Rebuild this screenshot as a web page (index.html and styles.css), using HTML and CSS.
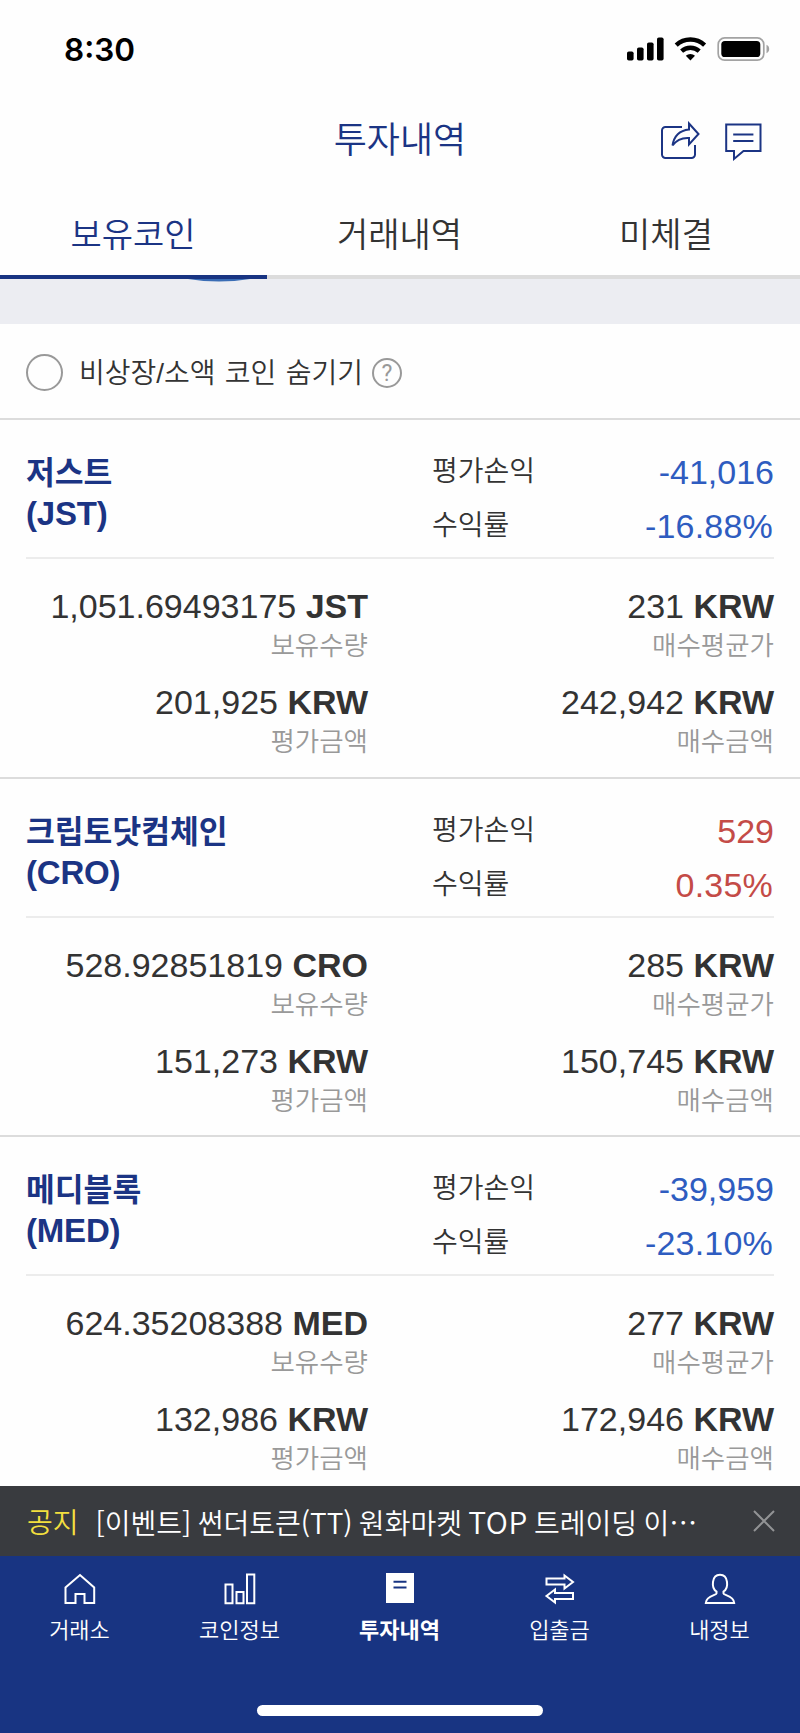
FILE: index.html
```
<!DOCTYPE html>
<html lang="ko">
<head>
    <meta charset="UTF-8">
    <meta name="viewport" content="width=device-width, initial-scale=1.0">
    <title>투자내역</title>
    <link rel="stylesheet" href="styles.css">
</head>
<body>
    <div class="screen">
        <div class="status-bar">
            <span class="time">8:30</span>
            <svg class="status-icons" width="144" height="26" viewBox="0 0 144 26">
                <rect x="1" y="15.5" width="6.6" height="9" rx="1.8"/>
                <rect x="11" y="11.5" width="6.6" height="13" rx="1.8"/>
                <rect x="21" y="6.5" width="6.6" height="18" rx="1.8"/>
                <rect x="31" y="1.5" width="6.6" height="23" rx="1.8"/>
                <path d="M50.2 9.2a20.5 20.5 0 0 1 28.4 0M55.6 15.2a13 13 0 0 1 17.6 0" fill="none" stroke="#000" stroke-width="4.4"/>
                <path d="M64.4 24.4l-4.6-4.6a6.7 6.7 0 0 1 9.2 0z"/>
                <rect x="92.2" y="1.9" width="45.6" height="22.3" rx="6.5" fill="none" stroke="#a3a3a3" stroke-width="1.7"/>
                <rect x="95.3" y="5" width="39" height="16" rx="3.6"/>
                <path d="M140.5 8.8v8.4c1.7-.7 2.7-2.2 2.7-4.2s-1-3.5-2.7-4.2z" fill="#a3a3a3"/>
            </svg>
        </div>

        <div class="header">
            <h1>투자내역</h1>
            <div class="header-icons">
                <svg width="40" height="40" viewBox="0 0 40 40">
                    <path d="M22 6H5.5A3.5 3.5 0 0 0 2 9.500V33.500A3.5 3.5 0 0 0 5.5 37H31.500A3.5 3.5 0 0 0 35 33.500V24"/>
                    <path d="M29 2.5l9.500 10.500-9.500 10.500v-6.500c-8-.5-12.500 2-16.500 7.500 1.500-9.500 7-15 16.500-16z"/>
                </svg>
                <svg width="40" height="40" viewBox="0 0 40 40">
                    <path d="M2.2 3.5h34.3v26.4H19.500l-9.500 8v-8H2.200zM9.200 13.500h20.200M9.200 20h20.200"/>
                </svg>
            </div>
        </div>

        <div class="tabs">
            <div class="tab active">보유코인</div>
            <div class="tab">거래내역</div>
            <div class="tab">미체결</div>
        </div>

        <div class="content">
            <div class="chart-area">
                <svg width="62" height="3" viewBox="0 0 62 3">
                    <path d="M0 0h62q-31 5-62 0z" fill="#3a6db5"/>
                </svg>
            </div>

            <div class="filter">
                <span class="radio"></span>
                <span class="filter-label">비상장/소액 코인 숨기기</span>
                <span class="help">?</span>
            </div>

            <div class="coin">
                <div class="summary">
                    <div class="name">저스트<b>(JST)</b></div>
                    <div class="rates">
                        <div class="rate"><span>평가손익</span><span class="value down">-41,016</span></div>
                        <div class="rate"><span>수익률</span><span class="value down percent">-16.88%</span></div>
                    </div>
                </div>
                <div class="details">
                    <div class="item">1,051.69493175 <b>JST</b><small>보유수량</small></div>
                    <div class="item">231 <b>KRW</b><small>매수평균가</small></div>
                    <div class="item">201,925 <b>KRW</b><small>평가금액</small></div>
                    <div class="item">242,942 <b>KRW</b><small>매수금액</small></div>
                </div>
            </div>

            <div class="coin">
                <div class="summary">
                    <div class="name">크립토닷컴체인<b>(CRO)</b></div>
                    <div class="rates">
                        <div class="rate"><span>평가손익</span><span class="value up">529</span></div>
                        <div class="rate"><span>수익률</span><span class="value up percent">0.35%</span></div>
                    </div>
                </div>
                <div class="details">
                    <div class="item">528.92851819 <b>CRO</b><small>보유수량</small></div>
                    <div class="item">285 <b>KRW</b><small>매수평균가</small></div>
                    <div class="item">151,273 <b>KRW</b><small>평가금액</small></div>
                    <div class="item">150,745 <b>KRW</b><small>매수금액</small></div>
                </div>
            </div>

            <div class="coin">
                <div class="summary">
                    <div class="name">메디블록<b>(MED)</b></div>
                    <div class="rates">
                        <div class="rate"><span>평가손익</span><span class="value down">-39,959</span></div>
                        <div class="rate"><span>수익률</span><span class="value down percent">-23.10%</span></div>
                    </div>
                </div>
                <div class="details">
                    <div class="item">624.35208388 <b>MED</b><small>보유수량</small></div>
                    <div class="item">277 <b>KRW</b><small>매수평균가</small></div>
                    <div class="item">132,986 <b>KRW</b><small>평가금액</small></div>
                    <div class="item">172,946 <b>KRW</b><small>매수금액</small></div>
                </div>
            </div>
        </div>

        <div class="notice">
            <span class="notice-tag">공지</span>
            <span class="notice-text">[이벤트] 썬더토큰(TT) 원화마켓 <span class="latin">TOP</span> 트레이딩 이⋯</span>
            <svg width="22" height="22" viewBox="0 0 22 22">
                <path d="M1 1l20 20M21 1L1 21"/>
            </svg>
        </div>

        <div class="bottom-nav">
            <div class="nav-items">
                <div class="nav-item">
                    <svg width="32" height="32" viewBox="0 0 32 32">
                        <path d="M1.5 30V14.500L16 2l14.200 12.500V30h-9.700v-9h-9v9z"/>
                    </svg>
                    <span>거래소</span>
                </div>
                <div class="nav-item">
                    <svg width="32" height="32" viewBox="0 0 32 32">
                        <path d="M1.5 11.500h7v18.700h-7zM12.500 19h7v11.200h-7zM23 1.500h7.300v28.700H23z"/>
                    </svg>
                    <span>코인정보</span>
                </div>
                <div class="nav-item active">
                    <svg width="32" height="32" viewBox="0 0 32 32">
                        <path class="solid" d="M2 0h28v30H2z"/>
                        <path class="lines" d="M9.500 8.800h13M9.500 14.600h13"/>
                    </svg>
                    <span>투자내역</span>
                </div>
                <div class="nav-item">
                    <svg width="32" height="32" viewBox="0 0 32 32">
                        <path d="M2.500 5.500H20.500V2.500l8.500 6.500-8.500 6.500v-4H2.500zM29 20H11v-3.500L2.500 23 11 29.500v-3.500h18z"/>
                    </svg>
                    <span>입출금</span>
                </div>
                <div class="nav-item">
                    <svg width="32" height="32" viewBox="0 0 32 32">
                        <path d="M12.500 18.500C7 15 7.500 1.700 16 1.700S25 15 19.500 18.500v2c0 1.800 10.500 2.200 10.700 9.500H1.800c.2-7.300 10.700-7.700 10.700-9.500z"/>
                    </svg>
                    <span>내정보</span>
                </div>
            </div>
            <div class="home-indicator"></div>
        </div>
    </div>
</body>
</html>
```

FILE: styles.css
```
* {
    box-sizing: border-box;
}
body {
    margin: 0;
    background: #fefefe;
    color: #333;
    font-family: "Liberation Sans", "Noto Sans CJK KR", sans-serif;
}
.screen {
    display: flex;
    flex-direction: column;
    width: 800px;
    height: 1733px;
    overflow: hidden;
}
.status-bar {
    display: flex;
    justify-content: space-between;
    height: 96px;
    padding: 36px 30px 0 64px;
}
.time {
    padding-top: 1px;
    font-family: Inter, sans-serif;
    font-size: 31.5px;
    font-weight: 600;
    line-height: 26px;
    color: #000;
}
.header {
    display: grid;
    grid-template-columns: 1fr auto 1fr;
    align-items: center;
    height: 90px;
    padding: 0 36px;
}
.header h1 {
    grid-column: 2;
    margin: 0;
    font-size: 36px;
    font-weight: 350;
    line-height: 40px;
    color: #1b3484;
}
.header-icons {
    display: flex;
    justify-content: flex-end;
    gap: 24px;
}
.header-icons svg {
    fill: none;
    stroke: #1b3484;
    stroke-width: 2;
}
.tabs {
    display: grid;
    grid-template-columns: 267px 266px 267px;
    height: 93px;
}
.tab {
    border-bottom: 4px solid #dcdcdc;
    padding: 29px 1px 0 0;
    font-size: 34px;
    font-weight: 350;
    line-height: 40px;
    text-align: center;
}
.tab.active {
    border-color: #183482;
    color: #1b3484;
}
.content {
    flex: 1;
    min-height: 0;
    overflow: hidden;
}
.chart-area {
    height: 45px;
    padding-left: 188px;
    background: #ecedf2;
}
.chart-area svg {
    display: block;
}
.filter {
    display: flex;
    align-items: center;
    height: 94px;
    padding: 2px 26px 0;
}
.radio {
    width: 37px;
    height: 37px;
    border: 2px solid #999;
    border-radius: 50%;
}
.filter-label {
    margin-left: 16px;
    padding-top: 3px;
    font-size: 28px;
    font-weight: 350;
    line-height: 40px;
    word-spacing: 1.5px;
}
.help {
    width: 30px;
    height: 30px;
    margin: 1px 0 0 9px;
    border: 2px solid #999;
    border-radius: 50%;
    font-family: Roboto, sans-serif;
    font-size: 23px;
    line-height: 27px;
    text-align: center;
    color: #999;
}
.coin {
    height: 358.5px;
    padding: 0 26px;
    border-top: 2px solid #dcdcdc;
}
.summary {
    display: grid;
    grid-template-columns: 406px 1fr;
    height: 139px;
    padding-top: 25px;
    border-bottom: 2px solid #ececec;
}
.name {
    padding-top: 8px;
    font-size: 31.3px;
    font-weight: bold;
    line-height: 41px;
    color: #1b3484;
}
.name b {
    display: block;
    margin-top: -1px;
    font-size: 33px;
    letter-spacing: -0.2px;
}
.rate {
    display: flex;
    justify-content: space-between;
    height: 54px;
    font-size: 28px;
    font-weight: 350;
    line-height: 54px;
}
.value {
    font-size: 34px;
}
.percent {
    padding-right: 1px;
    letter-spacing: 0.2px;
}
.down {
    color: #2e5cc0;
}
.up {
    color: #c44b47;
}
.details {
    display: grid;
    grid-template-columns: 342px 406px;
    row-gap: 16px;
    padding-top: 27px;
    text-align: right;
}
.item {
    font-size: 34px;
    line-height: 40px;
}
.item small {
    display: block;
    font-size: 26.5px;
    font-weight: 350;
    line-height: 40px;
    color: #999;
}
.notice {
    display: flex;
    align-items: center;
    height: 70px;
    padding: 0 25px 0 27px;
    background: #393b3f;
    font-family: "Noto Sans CJK KR", sans-serif;
    font-size: 28px;
    font-weight: 350;
    line-height: 38px;
    color: #fff;
}
.notice-tag {
    margin-right: 17px;
    color: #f3df3e;
}
.notice-text {
    flex: 1;
    white-space: nowrap;
    word-spacing: -1.5px;
}
.latin {
    font-size: 30px;
    letter-spacing: 0.5px;
}
.notice svg {
    fill: none;
    stroke: #929395;
    stroke-width: 2;
}
.bottom-nav {
    display: flex;
    flex-direction: column;
    justify-content: space-between;
    align-items: center;
    height: 177px;
    padding: 17px 0;
    background: #183482;
}
.nav-items {
    display: grid;
    grid-template-columns: repeat(5, 160px);
}
.nav-item {
    display: flex;
    flex-direction: column;
    align-items: center;
    padding-right: 1px;
    font-size: 22px;
    font-weight: 350;
    line-height: 30px;
    color: #fff;
}
.nav-item span {
    margin-top: 11px;
}
.nav-item.active {
    font-weight: bold;
}
.nav-item svg {
    fill: none;
    stroke: #fff;
    stroke-width: 2;
}
.nav-item .solid {
    fill: #fff;
    stroke: none;
}
.nav-item .lines {
    stroke: #183482;
}
.home-indicator {
    width: 286px;
    height: 11px;
    border-radius: 6px;
    background: #fff;
}
```
